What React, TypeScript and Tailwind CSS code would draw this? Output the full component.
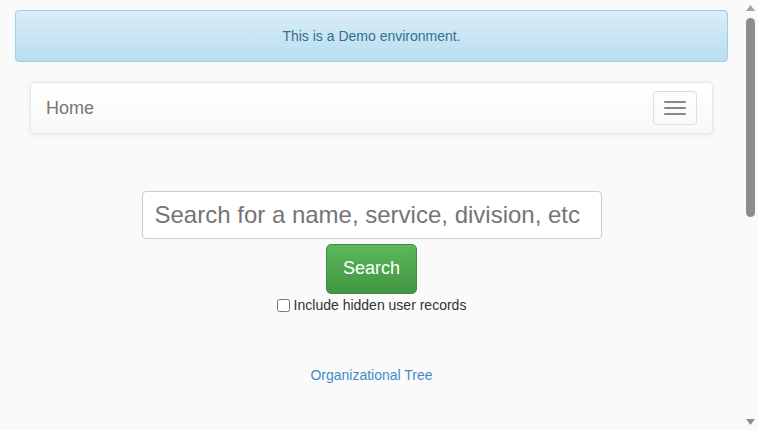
import React from "react";

export default function App() {
  return (
    <div className="flex h-[430px] overflow-hidden bg-[#fafafa] font-['Liberation_Sans',Arial,sans-serif] text-[14px] leading-[20px] text-[#333]">
      <div className="w-[743px] shrink-0 px-[15px] pt-[10px]">
        <div className="mb-[20px] rounded-[4px] border border-[#9acfea] bg-gradient-to-b from-[#d9edf7] to-[#b9def0] p-[15px] text-center text-[#31708f]">
          This is a Demo environment.
        </div>
        <div className="px-[15px]">
          <nav className="flex h-[52px] items-start justify-between rounded-[4px] border border-[#e7e7e7] bg-gradient-to-b from-[#ffffff] to-[#f8f8f8] shadow-[0_1px_5px_rgba(0,0,0,0.075)]">
            <a className="block px-[15px] py-[15px] text-[18px] leading-[20px] text-[#777]">Home</a>
            <button className="mr-[15px] mt-[8px] flex h-[34px] w-[44px] flex-col items-center justify-center gap-[4px] rounded-[4px] border border-[#ddd]">
              <span className="block h-[2px] w-[22px] rounded-[1px] bg-[#888]"></span>
              <span className="block h-[2px] w-[22px] rounded-[1px] bg-[#888]"></span>
              <span className="block h-[2px] w-[22px] rounded-[1px] bg-[#888]"></span>
            </button>
          </nav>
        </div>
        <div className="mt-[57px] flex flex-col items-center">
          <input
            type="text"
            placeholder="Search for a name, service, division, etc"
            className="h-[48px] w-[460px] rounded-[4px] border border-[#ccc] bg-white px-[12px] text-[24px] text-[#555] placeholder:text-[#757575] focus:outline-none"
          />
          <button className="mt-[5px] h-[50px] w-[91px] rounded-[5px] border border-[#3e8f3e] bg-gradient-to-b from-[#5cb85c] to-[#419641] pb-[2px] text-[18px] text-white">
            Search
          </button>
          <label className="mt-[1px] flex items-center gap-[4px] text-[14px] text-[#333]">
            <input type="checkbox" className="m-0 h-[13px] w-[13px]" />
            Include hidden user records
          </label>
          <a className="mt-[50px] text-[14px] text-[#428bca]">Organizational Tree</a>
        </div>
      </div>
      <div className="flex w-[15px] shrink-0 flex-col items-center bg-[#fafafa] py-[5px]">
        <svg width="9" height="6" viewBox="0 0 9 6" className="shrink-0">
          <polygon points="4.5,0 9,6 0,6" fill="#a3a3a3" />
        </svg>
        <div className="mt-[7px] h-[199px] w-[9px] rounded-[5px] bg-[#8c8c8c]"></div>
        <div className="flex-1"></div>
        <svg width="9" height="6" viewBox="0 0 9 6" className="shrink-0">
          <polygon points="0,0 9,0 4.5,6" fill="#8c8c8c" />
        </svg>
      </div>
    </div>
  );
}
